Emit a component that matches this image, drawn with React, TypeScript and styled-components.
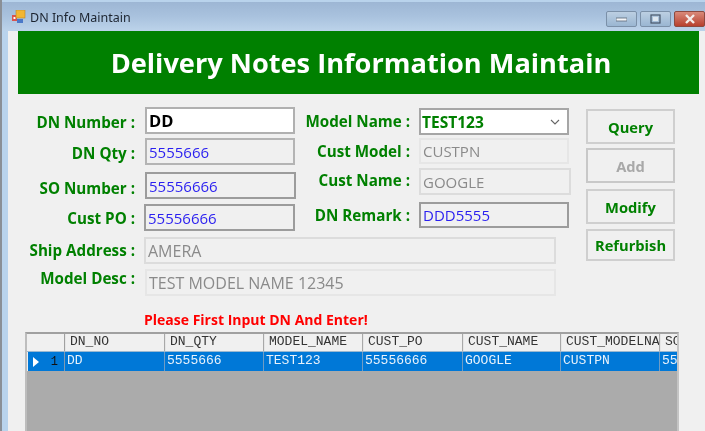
import styled, { createGlobalStyle } from 'styled-components';

const COLUMNS = [
	{ title: 'DN_NO', value: 'DD', width: 100 },
	{ title: 'DN_QTY', value: '5555666', width: 99 },
	{ title: 'MODEL_NAME', value: 'TEST123', width: 99 },
	{ title: 'CUST_PO', value: '55556666', width: 100 },
	{ title: 'CUST_NAME', value: 'GOOGLE', width: 98 },
	{ title: 'CUST_MODELNA', value: 'CUSTPN', width: 99 },
	{ title: 'SO', value: '55', width: 18 },
];

export default function App() {
	return (
		<Window>
			<GlobalStyle />
			<TitleBar>
				<AppIcon width='14' height='14' viewBox='0 0 14 14'>
					<rect x='0' y='5' width='5' height='6' fill='#d9534f' />
					<rect x='1.5' y='7' width='2' height='2' fill='#fff' />
					<rect x='4' y='0' width='9' height='8' fill='#f2b632' stroke='#b9852a' strokeWidth='0.6' />
					<rect x='5' y='9' width='6' height='4' fill='#4a78c8' />
				</AppIcon>
				<TitleText>DN Info Maintain</TitleText>
				<Controls>
					<ControlButton>
						<svg width='11' height='6' viewBox='0 0 11 6'>
							<rect x='0' y='2' width='11' height='3' fill='#f4f6f8' stroke='#5a6878' strokeWidth='0.8' />
						</svg>
					</ControlButton>
					<ControlButton>
						<svg width='11' height='10' viewBox='0 0 11 10'>
							<rect x='1' y='1' width='9' height='8' fill='none' stroke='#46566a' strokeWidth='1.2' />
							<rect x='3' y='3' width='5' height='4' fill='#dfe8f0' />
						</svg>
					</ControlButton>
					<CloseButton>
						<svg width='12' height='10' viewBox='0 0 12 10'>
							<path d='M2 1l8 8M10 1l-8 8' stroke='#f4ecea' strokeWidth='2.4' fill='none' />
						</svg>
					</CloseButton>
				</Controls>
			</TitleBar>
			<Client>
				<Banner>Delivery Notes Information Maintain</Banner>
				<FormArea>
					<Fields>
						<TwoColumns>
							<Column>
								<Row>
									<LeftLabel $drop={1}>DN Number :</LeftLabel>
									<Input $kind='active'>DD</Input>
								</Row>
								<Row $top={4}>
									<LeftLabel $drop={1}>DN Qty :</LeftLabel>
									<Input $kind='blue'>5555666</Input>
								</Row>
								<Row $top={7}>
									<LeftLabel $drop={2}>SO Number :</LeftLabel>
									<Input $kind='blue' $width={151} $dark>55556666</Input>
								</Row>
								<Row $top={5}>
									<LeftLabel>Cust PO :</LeftLabel>
									<Input $kind='blue' $left={-1} $width={151} $dark>55556666</Input>
								</Row>
							</Column>
							<RightColumn>
								<Row>
									<RightLabel $drop={-1}>Model Name :</RightLabel>
									<Select>
										<span>TEST123</span>
										<svg width='10' height='6' viewBox='0 0 10 6'>
											<path d='M1 1l4 4 4-4' fill='none' stroke='#666' strokeWidth='1.1' />
										</svg>
									</Select>
								</Row>
								<Row $top={3}>
									<RightLabel>Cust Model :</RightLabel>
									<Input $kind='grey' $height={26} $faint>CUSTPN</Input>
								</Row>
								<Row $top={4}>
									<RightLabel $drop={-2}>Cust Name :</RightLabel>
									<Input $kind='grey' $height={27} $width={152} $light>GOOGLE</Input>
								</Row>
								<Row $top={7}>
									<RightLabel>DN Remark :</RightLabel>
									<Input $kind='blue' $height={26} $dark>DDD5555</Input>
								</Row>
							</RightColumn>
						</TwoColumns>
						<Row $top={6}>
							<LeftLabel $drop={-1}>Ship Address :</LeftLabel>
							<Input $kind='grey' $left={-1} $width={412} $light $wide>AMERA</Input>
						</Row>
						<Row $top={5}>
							<LeftLabel $drop={-5}>Model Desc :</LeftLabel>
							<Input $kind='grey' $width={411} $faint $wide>TEST MODEL NAME 12345</Input>
						</Row>
					</Fields>
					<Buttons>
						<ActionButton $height={35}>Query</ActionButton>
						<ActionButton $height={35} $top={4} $disabled>Add</ActionButton>
						<ActionButton $height={35} $top={6}>Modify</ActionButton>
						<ActionButton $height={32} $top={5}>Refurbish</ActionButton>
					</Buttons>
				</FormArea>
				<Message>Please First Input DN And Enter!</Message>
				<GridView>
					<HeaderRow>
						<HeaderCorner />
						{COLUMNS.map(col => (
							<HeaderCell key={col.title} style={{ width: col.width }}>
								{col.title}
							</HeaderCell>
						))}
					</HeaderRow>
					<DataRow>
						<RowHead>
							<svg width='6' height='10' viewBox='0 0 6 10'>
								<path d='M0 0l6 5-6 5z' fill='#fff' />
							</svg>
							<span>1</span>
						</RowHead>
						{COLUMNS.map(col => (
							<DataCell key={col.title} style={{ width: col.width }}>
								{col.value}
							</DataCell>
						))}
					</DataRow>
				</GridView>
			</Client>
		</Window>
	);
}

const GlobalStyle = createGlobalStyle`
	html, body {
		margin: 0;
		padding: 0;
		background: #fff;
	}
`;

const Window = styled.div`
	width: 705px;
	height: 431px;
	overflow: hidden;
	display: flex;
	flex-direction: column;
	box-sizing: border-box;
	padding-top: 2px;
	background: linear-gradient(90deg, #8a8f96 0, #8a8f96 2px, #b9d3ec 2px, #b9d3ec 100%);
	font-family: 'Open Sans', 'Noto Sans', sans-serif;
	filter: blur(0.4px);
`;

const TitleBar = styled.div`
	height: 29px;
	flex: none;
	display: flex;
	align-items: center;
	margin-left: 2px;
	padding-left: 10px;
	background: linear-gradient(180deg, #9db6d4 0%, #a9c2de 50%, #bcd3ea 100%);
`;

const AppIcon = styled.svg`
	flex: none;
	margin-top: 1px;
`;

const TitleText = styled.span`
	margin-left: 4px;
	font-size: 12.5px;
	color: #1c2430;
	font-family: 'Noto Sans', sans-serif;
	white-space: nowrap;
	margin-top: 1px;
`;

const Controls = styled.div`
	margin-left: auto;
	display: flex;
	gap: 3px;
	align-self: flex-start;
	margin-top: 9px;
`;

const ControlButton = styled.div`
	width: 31px;
	height: 16px;
	box-sizing: border-box;
	display: flex;
	align-items: center;
	justify-content: center;
	border: 1px solid #7b90a8;
	border-radius: 2px;
	background: linear-gradient(180deg, #bccfe2, #9ab6d2);
`;

const CloseButton = styled(ControlButton)`
	border-color: #8d4a40;
	background: linear-gradient(180deg, #d98a7a, #b8402e);
`;

const Client = styled.div`
	flex: 1;
	min-height: 0;
	margin-left: 8px;
	background: #f0f0f0;
	display: flex;
	flex-direction: column;
`;

const Banner = styled.div`
	height: 63px;
	flex: none;
	margin: 0 6px 0 10px;
	display: flex;
	align-items: center;
	justify-content: center;
	padding-left: 5px;
	box-sizing: border-box;
	background: #008000;
	color: #fff;
	font-size: 27.2px;
	font-weight: 700;
	white-space: nowrap;
`;

const FormArea = styled.div`
	display: flex;
	align-items: flex-start;
	margin-top: 13px;
`;

const Fields = styled.div`
	width: 548px;
	flex: none;
	display: flex;
	flex-direction: column;
`;

const TwoColumns = styled.div`
	display: flex;
	align-items: flex-start;
`;

const Column = styled.div`
	width: 289px;
	flex: none;
	display: flex;
	flex-direction: column;
`;

const RightColumn = styled(Column)`
	width: 259px;
	margin-top: 1px;
`;

const Row = styled.div<{ $top?: number }>`
	display: flex;
	align-items: center;
	margin-top: ${({ $top }) => $top ?? 0}px;
`;

const LabelBase = styled.label<{ $drop?: number }>`
	flex: none;
	text-align: right;
	font-size: 15.2px;
	font-weight: 700;
	color: #008000;
	white-space: nowrap;
	margin-top: ${({ $drop }) => ($drop ?? 0) * 2}px;
`;

const LeftLabel = styled(LabelBase)`
	width: 127px;
	margin-right: 10px;
`;

const RightLabel = styled(LabelBase)`
	width: 113px;
	margin-right: 9px;
`;

const Input = styled.div<{
	$kind: 'active' | 'blue' | 'grey';
	$width?: number;
	$height?: number;
	$left?: number;
	$dark?: boolean;
	$light?: boolean;
	$faint?: boolean;
	$wide?: boolean;
}>`
	box-sizing: border-box;
	flex: none;
	width: ${({ $width }) => $width ?? 150}px;
	height: ${({ $height }) => $height ?? 27}px;
	margin-left: ${({ $left }) => $left ?? 0}px;
	display: flex;
	align-items: center;
	padding-left: 2px;
	font-size: ${({ $wide }) => ($wide ? 16 : 15)}px;
	white-space: nowrap;
	overflow: hidden;
	border: ${({ $dark, $light, $faint, $kind }) =>
		$faint
			? '2px solid #e6e6e6'
			: $light
			? '2px solid #dcdcdc'
			: $dark
			? '2px solid #9c9c9c'
			: $kind === 'active'
			? '2px solid #b0b0b0'
			: '2px solid #b4b4b4'};
	background: ${({ $kind }) => ($kind === 'active' ? '#fff' : '#f0f0f0')};
	color: ${({ $kind }) =>
		$kind === 'blue' ? '#2a1ff0' : $kind === 'grey' ? '#8a8a8a' : '#000'};
	font-weight: ${({ $kind }) => ($kind === 'active' ? 700 : 400)};
	${({ $kind }) => $kind === 'active' && 'font-size: 16.5px;'}
`;

const Select = styled.div`
	box-sizing: border-box;
	flex: none;
	width: 150px;
	height: 27px;
	display: flex;
	align-items: center;
	justify-content: space-between;
	padding: 0 7px 0 1px;
	background: #fff;
	border: 2px solid #a6a6a6;
	color: #008000;
	font-size: 15.5px;
	font-weight: 700;
`;

const Buttons = styled.div`
	flex: none;
	width: 89px;
	margin-left: 30px;
	margin-top: 2px;
	display: flex;
	flex-direction: column;
`;

const ActionButton = styled.div<{ $height: number; $top?: number; $disabled?: boolean }>`
	box-sizing: border-box;
	height: ${({ $height }) => $height}px;
	margin-top: ${({ $top }) => $top ?? 0}px;
	display: flex;
	align-items: center;
	justify-content: center;
	border: 2px solid ${({ $disabled }) => ($disabled ? '#c8c8c8' : '#cfcfcf')};
	font-size: 14.7px;
	font-weight: 700;
	color: ${({ $disabled }) => ($disabled ? '#a8a8a8' : '#008000')};
`;

const Message = styled.div`
	margin: 15px 0 0 136px;
	height: 18px;
	line-height: 18px;
	font-size: 14px;
	font-weight: 700;
	color: #ff0000;
	white-space: nowrap;
`;

const GridView = styled.div`
	flex: 1;
	min-height: 0;
	margin: 3px 26px 0 17px;
	box-sizing: border-box;
	border: 2px solid #a0a0a0;
	border-bottom: none;
	border-left-color: #bdbdbd;
	border-right-color: #c4c4c4;
	background: #ababab;
	font-family: 'Liberation Mono', monospace;
	font-size: 13px;
`;

const HeaderRow = styled.div`
	display: flex;
	height: 17px;
	background: #f0f0f0;
	overflow: hidden;
`;

const HeaderCorner = styled.div`
	flex: none;
	width: 38px;
	box-sizing: border-box;
	border-right: 1px solid #a0a0a0;
`;

const HeaderCell = styled.div`
	flex: none;
	box-sizing: border-box;
	padding-left: 4px;
	line-height: 15px;
	color: #333;
	overflow: hidden;
	white-space: nowrap;
	border-left: 1px solid #e6e6e6;
	border-right: 1px solid #a8a8a8;
	&:last-child {
		border-right: none;
	}
`;

const DataRow = styled.div`
	display: flex;
	height: 19px;
	overflow: hidden;
	background: #0078d7;
	border-top: 1px solid #9ab8d0;
`;

const RowHead = styled.div`
	flex: none;
	width: 38px;
	box-sizing: border-box;
	display: flex;
	align-items: center;
	justify-content: space-between;
	padding: 0 6px 0 5px;
	border-left: 1px solid #f0f0f0;
	border-right: 1px solid #7f9ab2;
	color: #111;
	font-size: 12px;
`;

const DataCell = styled.div`
	flex: none;
	box-sizing: border-box;
	padding-left: 2px;
	line-height: 18px;
	color: #e8f2fb;
	overflow: hidden;
	white-space: nowrap;
	border-right: 1px solid #6f9cc4;
	&:last-child {
		border-right: none;
	}
`;
